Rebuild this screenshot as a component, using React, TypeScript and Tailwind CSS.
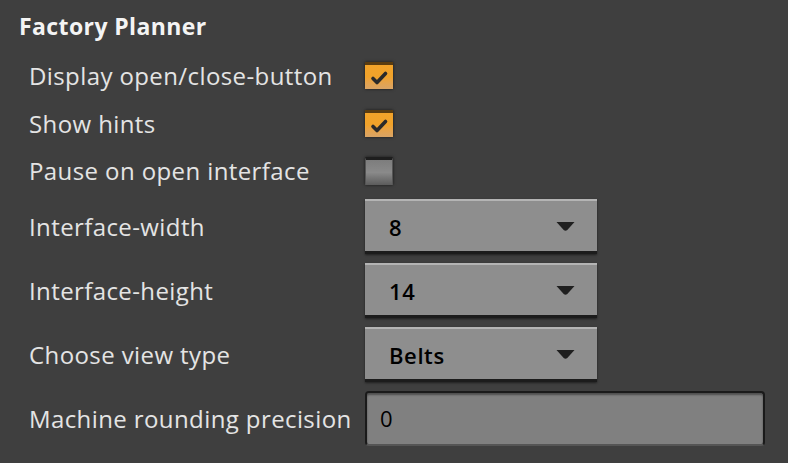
import React from "react";

const Check = () => (
  <svg viewBox="0 0 28 27" className="h-[27px] w-[28px]">
    <path d="M8 14.5 L12 18.5 L20.5 9.5" fill="none" stroke="#2a2a2a" strokeWidth="3.6" strokeLinecap="round" strokeLinejoin="round" />
  </svg>
);

const Checkbox: React.FC<{ checked?: boolean }> = ({ checked }) =>
  checked ? (
    <div className="h-[27px] w-[28px] border-t-[3px] border-t-[#5a3c10] bg-gradient-to-b from-[#f2a32a] via-[#f0a22a] to-[#d9a465] shadow-[0_0_3px_rgba(0,0,0,0.6)] flex items-center justify-center">
      <Check />
    </div>
  ) : (
    <div className="h-[28px] w-[28px] border-t-[3px] border-t-[#1e1e1e] border-x border-x-[#555] bg-gradient-to-b from-[#7d7d7d] via-[#8a8a8a] to-[#5c5c5c] shadow-[0_0_3px_rgba(0,0,0,0.6)]" />
  );

const Dropdown: React.FC<{ value: string }> = ({ value }) => (
  <div className="h-[55px] w-[232px] flex items-center justify-between pl-6 pr-[22px] bg-[#8e8e8e] border-t-2 border-t-[#b4b4b4] border-b-[3px] border-b-[#1c1c1c] shadow-[0_1px_2px_rgba(0,0,0,0.5)] text-[22px] font-semibold tracking-[0.6px] text-black">
    <span className="pt-0.5">{value}</span>
    <svg viewBox="0 0 20 10" className="h-[9px] w-[19px]">
      <path d="M0 0 H20 L12 9 Q10 10.5 8 9 Z" fill="#1f1f1f" />
    </svg>
  </div>
);

const Row: React.FC<{ label: string; children: React.ReactNode; className?: string }> = ({
  label,
  children,
  className = "",
}) => (
  <div className={`flex items-center ${className}`}>
    <span className="w-[336px] shrink-0 whitespace-nowrap text-[24px] tracking-[0.4px] text-[#e4e4e4]">{label}</span>
    {children}
  </div>
);

export default function App() {
  return (
    <div
      className="w-[788px] h-[463px] bg-[#3f3f3f] overflow-hidden"
      style={{ fontFamily: "'Open Sans', 'Liberation Sans', sans-serif" }}
    >
      <div className="pl-[19px] pt-[11px] text-[23px] font-bold tracking-[0.4px] text-[#f4f4f4] leading-[30px]">
        Factory Planner
      </div>
      <div className="pl-[29px] pt-[21px] flex flex-col">
        <Row label="Display open/close-button" className="h-[27px]">
          <Checkbox checked />
        </Row>
        <Row label="Show hints" className="h-[27px] mt-[21px]">
          <Checkbox checked />
        </Row>
        <Row label="Pause on open interface" className="h-[28px] mt-[20px]">
          <Checkbox />
        </Row>
        <Row label="Interface-width" className="mt-[14px]">
          <Dropdown value="8" />
        </Row>
        <Row label="Interface-height" className="mt-[9px]">
          <Dropdown value="14" />
        </Row>
        <Row label="Choose view type" className="mt-[9px]">
          <Dropdown value="Belts" />
        </Row>
        <Row label="Machine rounding precision" className="mt-[9px]">
          <div className="h-[55px] w-[400px] flex items-center pl-[13px] bg-[#808080] rounded-[4px] border-2 border-[#1a1a1a] border-b-[#555] shadow-[inset_0_2px_2px_rgba(0,0,0,0.4)] text-[22px] text-black">
            0
          </div>
        </Row>
      </div>
    </div>
  );
}
